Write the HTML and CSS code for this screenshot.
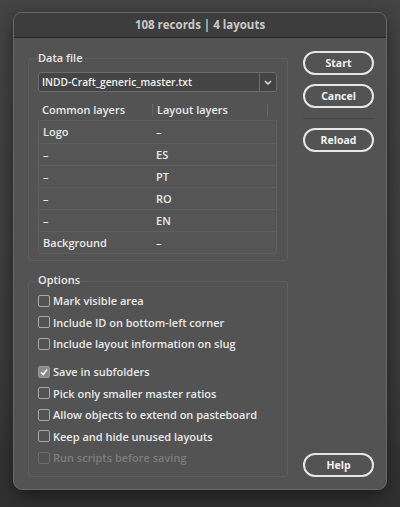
FILE: index.html
```html
<!DOCTYPE html>
<html lang="en">
<head>
    <meta charset="UTF-8">
    <meta name="viewport" content="width=device-width, initial-scale=1.0">
    <title>108 records | 4 layouts</title>
    <link rel="stylesheet" href="styles.css">
</head>
<body>

<div class="window">
    <!-- Title bar -->
    <div class="titlebar">108 records | 4 layouts</div>

    <div class="content">
        <div class="main">
            <!-- Data file -->
            <div class="panel data-panel">
                <div class="panel-label">Data file</div>
                <div class="select">
                    <span class="select-value">INDD-Craft_generic_master.txt</span>
                    <span class="select-arrow">
                        <svg width="8" height="5" viewBox="0 0 8 5"><path d="M1 1 L4 4 L7 1" fill="none" stroke="#e8e8e8" stroke-width="1.4"/></svg>
                    </span>
                </div>
                <div class="layers">
                    <div class="layers-head">
                        <span class="col col-common">Common layers</span>
                        <span class="col col-layout">Layout layers</span>
                        <span class="col col-rest"></span>
                    </div>
                    <div class="layers-body">
                        <div class="layer-row"><span class="col-common">Logo</span><span class="col-layout">–</span></div>
                        <div class="layer-row"><span class="col-common">–</span><span class="col-layout">ES</span></div>
                        <div class="layer-row"><span class="col-common">–</span><span class="col-layout">PT</span></div>
                        <div class="layer-row"><span class="col-common">–</span><span class="col-layout">RO</span></div>
                        <div class="layer-row"><span class="col-common">–</span><span class="col-layout">EN</span></div>
                        <div class="layer-row"><span class="col-common">Background</span><span class="col-layout">–</span></div>
                    </div>
                </div>
            </div>

            <!-- Options -->
            <div class="panel options-panel">
                <div class="panel-label">Options</div>
                <div class="option-group">
                    <label class="option"><span class="box"></span>Mark visible area</label>
                    <label class="option"><span class="box"></span>Include ID on bottom-left corner</label>
                    <label class="option"><span class="box"></span>Include layout information on slug</label>
                </div>
                <div class="option-group">
                    <label class="option"><span class="box checked"><svg width="10" height="10" viewBox="0 0 10 10"><path d="M2 5.2 L4.2 7.5 L8 2.5" fill="none" stroke="#f2f2f2" stroke-width="1.6"/></svg></span>Save in subfolders</label>
                    <label class="option"><span class="box"></span>Pick only smaller master ratios</label>
                    <label class="option"><span class="box"></span>Allow objects to extend on pasteboard</label>
                    <label class="option"><span class="box"></span>Keep and hide unused layouts</label>
                    <label class="option disabled"><span class="box"></span>Run scripts before saving</label>
                </div>
            </div>
        </div>

        <div class="side">
            <button class="btn">Start</button>
            <button class="btn">Cancel</button>
            <div class="separator"></div>
            <button class="btn">Reload</button>
            <button class="btn help">Help</button>
        </div>
    </div>
</div>

</body>
</html>
```

FILE: styles.css
```css
body {
    margin: 0;
    height: 507px;
    background: linear-gradient(#444444, #3b3b3b 70%, #303030);
    font-family: "Open Sans", "DejaVu Sans", sans-serif;
    font-size: 11px;
    font-weight: 600;
    color: #e8e8e8;
    overflow: hidden;
}
.window {
    position: relative;
    top: 12px;
    margin-left: 13px;
    width: 374px;
    height: 478px;
    box-sizing: border-box;
    border: 1px solid #686868;
    border-radius: 9px;
    background-color: #535353;
    box-shadow: 0 6px 18px rgba(0, 0, 0, 0.45);
    overflow: hidden;
    display: flex;
    flex-direction: column;
}
.titlebar {
    height: 24px;
    line-height: 24px;
    background-color: #3d3d3d;
    border-bottom: 1px solid #262626;
    text-align: center;
    font-size: 11.5px;
    font-weight: 700;
    color: #c9c9c9;
}
.content {
    flex: 1;
    display: flex;
    gap: 15px;
    padding: 0 12px 14px 14px;
}
.main {
    width: 260px;
    padding-top: 20px;
    display: flex;
    flex-direction: column;
}
.panel {
    border: 1px solid #5d5d5d;
    border-radius: 3px;
    padding: 0 10px 6px 9px;
}
.panel-label {
    height: 14px;
    line-height: 14px;
    margin-top: -8px;
    font-size: 11px;
}
/* Dropdown */
.select {
    margin-top: 7px;
    height: 20px;
    box-sizing: border-box;
    border: 1px solid #6c6c6c;
    border-radius: 3px;
    background-color: #444444;
    display: flex;
}
.select-value {
    flex: 1;
    line-height: 18px;
    padding-left: 3px;
    font-size: 10.2px;
    color: #f0f0f0;
}
.select-arrow {
    width: 16px;
    border-left: 1px solid #6c6c6c;
    display: flex;
    align-items: center;
    justify-content: center;
}
/* Layers table */
.layers {
    margin-top: 8px;
}
.layers-head {
    height: 20px;
    display: flex;
    align-items: center;
}
.layers-head .col {
    height: 12px;
    line-height: 12px;
}
.col-common {
    width: 109px;
    padding-left: 4px;
}
.layers-head .col-common {
    width: 110px;
}
.col-layout {
    padding-left: 4px;
}
.layers-head .col-layout {
    width: 110px;
    border-left: 1px solid #646464;
}
.layers-head .col-rest {
    border-left: 1px solid #646464;
}
.layers-body {
    border: 1px solid #5e5e5e;
    border-radius: 2px;
    background-color: #555555;
}
.layer-row {
    height: 21px;
    line-height: 21px;
    display: flex;
    border-top: 1px solid #606060;
}
.layer-row:first-child {
    border-top: none;
    height: 22px;
    line-height: 22px;
}
/* Options */
.options-panel {
    margin-top: 20px;
    padding-bottom: 7px;
}
.options-panel .panel-label {
    margin-top: -9px;
    margin-bottom: 3px;
}
.option-group + .option-group {
    margin-top: 6.5px;
}
.option {
    height: 21.5px;
    display: flex;
    align-items: center;
    gap: 3px;
}
.box {
    width: 12px;
    height: 12px;
    box-sizing: border-box;
    border: 1px solid #a9a9a9;
    border-radius: 2px;
    display: flex;
    align-items: center;
    justify-content: center;
}
.box.checked {
    background-color: #8a8a8a;
    border-color: #9a9a9a;
}
.option.disabled {
    color: #7c7c7c;
}
.option.disabled .box {
    border-color: #6c6c6c;
}
/* Buttons */
.side {
    width: 71px;
    padding-top: 13px;
    display: flex;
    flex-direction: column;
}
.btn {
    height: 24px;
    margin-bottom: 9px;
    border: 2px solid #e6e6e6;
    border-radius: 12px;
    background: transparent;
    color: #f2f2f2;
    font-family: inherit;
    font-size: 10.5px;
    font-weight: 700;
    padding: 0;
}
.separator {
    height: 1px;
    background-color: #474747;
    margin: 1px 0 9px;
}
.btn.help {
    margin-top: auto;
    margin-bottom: 0;
}
```
